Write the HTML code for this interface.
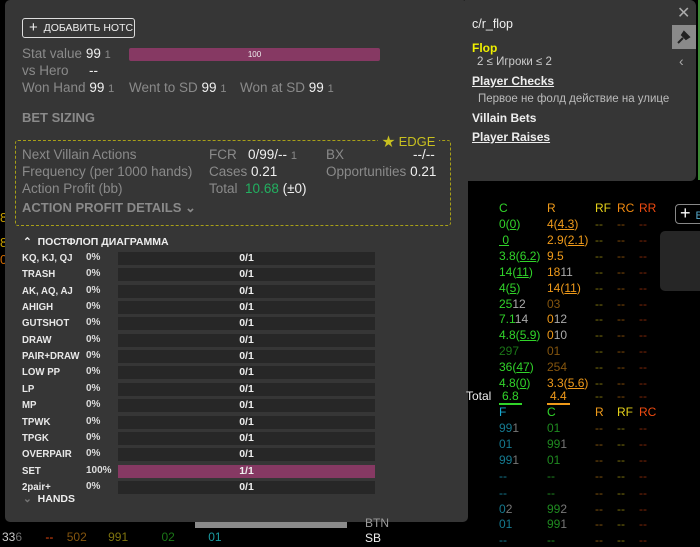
<!DOCTYPE html>
<html><head><meta charset="utf-8"><style>
*{margin:0;padding:0;box-sizing:border-box}
body{width:700px;height:542px;background:#000;position:relative;overflow:hidden;font-family:"Liberation Sans","Noto Sans CJK SC",sans-serif;font-size:13px;color:#fff}
.a{position:absolute;white-space:nowrap}
.panel{position:absolute;background:#363636;border-radius:5px}
.g{color:#8a8a8a}
.w{color:#f0f0f0}
.lbl{font-size:13.5px}
.row .t{position:absolute;left:22px;font-size:10.5px;color:#e8e8e8;font-weight:bold;transform:scaleX(.92);transform-origin:left}
.row .p{position:absolute;left:86px;font-size:10px;color:#ddd;font-weight:bold}
.row .b{position:absolute;left:118px;width:257px;height:13px;background:#272727;color:#eee;font-size:10.5px;text-align:center;line-height:13px;font-weight:bold}
.tb{font-size:12px}
.c{color:#31d42a}.r{color:#ef9a1a}.rf{color:#e6d21a}.rc{color:#f08a10}.rr{color:#ee4a10}
.dk{opacity:.55}
u{text-decoration:underline}
</style></head><body>
<div class="a" style="left:698px;top:0;width:2px;height:180px;background:#3d8a36"></div>
<div class="a" style="left:0;top:210px;color:#c9a000;font-size:13px">8</div>
<div class="a" style="left:0;top:235px;color:#c9a000;font-size:13px">8</div>
<div class="a" style="left:0;top:252px;color:#d06a00;font-size:13px">0</div>
<div class="a" style="left:660px;top:231px;width:50px;height:60px;background:#262626;border-radius:5px"></div>
<div class="a" style="left:675px;top:204px;width:40px;height:20px;border:1px solid #888;border-radius:4px;color:#fff;font-size:18px;line-height:16px;padding-left:4px">+ <span style="font-size:11px;color:#5ac">B</span></div>
<div class="a" style="left:195px;top:520px;width:152px;height:8px;background:#8a8a8a"></div>

<div class="panel" style="left:5px;top:0;width:463px;height:522px"></div>
<div class="a" style="left:22px;top:18px;width:113px;height:20px;border:1px solid #ddd;border-radius:3px;font-size:10.5px;line-height:18px;padding-left:6px;color:#eee"><span style="font-size:15px;vertical-align:-1px">+</span>&nbsp; ДОБАВИТЬ НОТС</div>
<div class="a lbl" style="left:22px;top:46px"><span class="g">Stat value</span> <b class="w" style="font-weight:normal">99</b> <span class="g" style="font-size:11px">1</span></div>
<div class="a" style="left:129px;top:48px;width:251px;height:13px;background:#863963;border-radius:2px;font-size:8px;text-align:center;line-height:13px;color:#eee">100</div>
<div class="a lbl" style="left:22px;top:63px"><span class="g">vs Hero</span></div>
<div class="a lbl w" style="left:89px;top:63px">--</div>
<div class="a lbl" style="left:22px;top:80px"><span class="g">Won Hand</span> <span class="w">99</span> <span class="g" style="font-size:11px">1</span></div>
<div class="a lbl" style="left:129px;top:80px"><span class="g">Went to SD</span> <span class="w">99</span> <span class="g" style="font-size:11px">1</span></div>
<div class="a lbl" style="left:240px;top:80px"><span class="g">Won at SD</span> <span class="w">99</span> <span class="g" style="font-size:11px">1</span></div>
<div class="a g" style="left:22px;top:110px;font-size:13px;font-weight:bold">BET SIZING</div>
<div class="a" style="left:15px;top:140px;width:436px;height:86px;border:1px dashed #a8a018;border-radius:3px"></div>
<div class="a" style="left:378px;top:131px;background:#363636;padding:0 4px;color:#c8c020;font-size:13px">★ EDGE</div>
<div class="a lbl g" style="left:22px;top:147px">Next Villain Actions</div>
<div class="a lbl g" style="left:22px;top:164px">Frequency (per 1000 hands)</div>
<div class="a lbl g" style="left:22px;top:181px">Action Profit (bb)</div>
<div class="a g" style="left:22px;top:200px;font-size:13px;font-weight:bold">ACTION PROFIT DETAILS ⌄</div>
<div class="a lbl" style="left:209px;top:147px"><span class="g">FCR</span> &nbsp; <span class="w">0/99/--</span> <span class="g" style="font-size:11px">1</span></div>
<div class="a lbl" style="left:209px;top:164px"><span class="g">Cases</span> <span class="w">0.21</span></div>
<div class="a lbl" style="left:209px;top:181px"><span class="g">Total</span> &nbsp;<span style="color:#22b060">10.68</span> <span class="w">(±0)</span></div>
<div class="a lbl g" style="left:326px;top:147px">BX</div>
<div class="a lbl w" style="left:413px;top:147px">--/--</div>
<div class="a lbl" style="left:326px;top:164px"><span class="g">Opportunities</span> <span class="w">0.21</span></div>
<div class="a" style="left:23px;top:236px;font-size:10.5px;font-weight:bold;color:#eee">⌃ &nbsp;ПОСТФЛОП ДИАГРАММА</div>
<div id="rows"></div>
<div class="a" style="left:23px;top:493px;font-size:10.5px;font-weight:bold;color:#eee"><span style="color:#777">⌄</span> &nbsp;HANDS</div>

<div class="panel" style="left:465px;top:0;width:231px;height:181px;border-radius:0 6px 6px 0"></div>
<div class="a" style="left:472px;top:17px;font-size:12.5px;color:#eee">c/r_flop</div>
<div class="a" style="left:472px;top:41px;font-size:12px;font-weight:bold;color:#f0f000">Flop</div>
<div class="a" style="left:477px;top:56px;font-size:11.5px;color:#ccc">2 ≤ Игроки ≤ 2</div>
<div class="a" style="left:472px;top:74px;font-size:12px;font-weight:bold;color:#eee"><u>Player Checks</u></div>
<div class="a" style="left:478px;top:93px;font-size:11.5px;color:#bbb">Первое не фолд действие на улице</div>
<div class="a" style="left:472px;top:111px;font-size:12px;font-weight:bold;color:#eee">Villain Bets</div>
<div class="a" style="left:472px;top:130px;font-size:12px;font-weight:bold;color:#eee"><u>Player Raises</u></div>
<div class="a" style="left:677px;top:3px;color:#aaa;font-size:16px">✕</div>
<div class="a" style="left:672px;top:25px;width:24px;height:24px;background:#8a8a8a"></div>
<svg class="a" style="left:675px;top:28px" width="18" height="18" viewBox="0 0 18 18"><path d="M3 15 L8 10 M7 6 L12 11 M9 4 L14 9 L11 11 L7 7 Z" stroke="#222" stroke-width="2" fill="#222"/></svg>
<div class="a" style="left:679px;top:53px;color:#aaa;font-size:14px">‹</div>

<div id="tbl"></div>
<div class="a" style="left:466px;top:389px;font-size:12px;color:#eee">Total</div>
<div class="a" style="left:2px;top:530px;font-size:12px;color:#ccc">33<span class="dk">6</span> <span class="rr" style="margin-left:20px">--</span> <span class="r dk" style="margin-left:10px">502</span> <span class="rf dk" style="margin-left:18px">991</span> <span class="c dk" style="margin-left:30px">02</span> <span style="color:#1a9aa0;margin-left:30px">01</span></div>
<div class="a" style="left:365px;top:531px;font-size:12px;color:#eee">SB</div>
<div class="a" style="left:365px;top:516px;font-size:12px;color:#999">BTN</div>

<script>
var names=["KQ, KJ, QJ","TRASH","AK, AQ, AJ","AHIGH","GUTSHOT","DRAW","PAIR+DRAW","LOW PP","LP","MP","TPWK","TPGK","OVERPAIR","SET","2pair+"];
var h="";
names.forEach(function(n,i){var y=252+i*16.35;var set=n=="SET";
h+='<div class="a row" style="left:0;top:'+y+'px;width:400px;height:14px"><span class="t">'+n+'</span><span class="p">'+(set?"100%":"0%")+'</span><span class="b" style="top:0;'+(set?'background:#863963':'')+'">'+(set?"1/1":"0/1")+'</span></div>';});
document.getElementById("rows").innerHTML=h;
var t="";
function row(y,c1,c2,cls1,cls2,dash){t+='<div class="a tb" style="left:499px;top:'+y+'px"><span class="'+cls1+'">'+c1+'</span></div><div class="a tb" style="left:547px;top:'+y+'px"><span class="'+cls2+'">'+c2+'</span></div>';
(dash||[["rf",595],["rc",617],["rr",639]]).forEach(function(d){t+='<div class="a tb '+d[0]+' dk" style="left:'+d[1]+'px;top:'+y+'px">--</div>';});}
t+='<div class="a tb c" style="left:499px;top:201px">C</div><div class="a tb r" style="left:547px;top:201px">R</div><div class="a tb rf" style="left:595px;top:201px">RF</div><div class="a tb rc" style="left:617px;top:201px">RC</div><div class="a tb rr" style="left:639px;top:201px">RR</div>';
var A=[["0(<u>0</u>)","4(<u>4.3</u>)"],["<u>&nbsp;0</u>","2.9(<u>2.1</u>)"],["3.8(<u>6.2</u>)","9.5"],["14(<u>11</u>)","18<span style=color:#aaa>11</span>"],["4(<u>5</u>)","14(<u>11</u>)"],["25<span style=color:#aaa>12</span>","<span class=dk>03</span>"],["7.1<span style=color:#aaa>14</span>","0<span style=color:#aaa>12</span>"],["4.8(<u>5.9</u>)","0<span style=color:#aaa>10</span>"],["<span class=dk>297</span>","<span class=dk>01</span>"],["36(<u>47</u>)","<span class=dk>254</span>"],["4.8(<u>0</u>)","3.3(<u>5.6</u>)"]];
A.forEach(function(a,i){row(217+i*15.9,a[0],a[1],"c","r");});
t+='<div class="a tb c" style="left:499px;top:389px;border-bottom:2px solid #31d42a;padding:0 3px">6.8</div><div class="a tb r" style="left:547px;top:389px;border-bottom:2px solid #ef9a1a;padding:0 3px">4.4</div>';
["rf","rc","rr"].forEach(function(c,j){t+='<div class="a tb '+c+' dk" style="left:'+[595,617,639][j]+'px;top:389px">--</div>';});
t+='<div class="a tb" style="left:499px;top:405px;color:#18a8d0">F</div><div class="a tb c" style="left:547px;top:405px">C</div><div class="a tb r" style="left:595px;top:405px">R</div><div class="a tb rf" style="left:617px;top:405px">RF</div><div class="a tb rr" style="left:639px;top:405px">RC</div>';
var B=[["99<span style=color:#777>1</span>","01"],["01","99<span style=color:#777>1</span>"],["99<span style=color:#777>1</span>","01"],["--","--"],["--","--"],["0<span style=color:#777>2</span>","99<span style=color:#777>2</span>"],["01","99<span style=color:#777>1</span>"],["--","--"]];
var dd=[["r",595],["rf",617],["rr",639]];
B.forEach(function(b,i){var y=421+i*15.9+(i>=4?1:0);t+='<div class="a tb" style="left:499px;top:'+y+'px;color:#157a90">'+b[0]+'</div><div class="a tb" style="left:547px;top:'+y+'px;color:#1f8a20">'+b[1]+'</div>';dd.forEach(function(d){t+='<div class="a tb '+d[0]+' dk" style="left:'+d[1]+'px;top:'+y+'px">--</div>';});});
document.getElementById("tbl").innerHTML=t;
</script>
</body></html>
